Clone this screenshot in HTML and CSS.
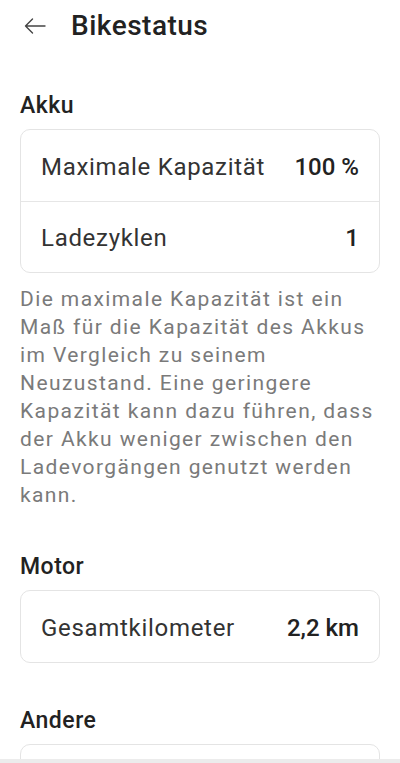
FILE: index.html
```html
<!DOCTYPE html>
<html lang="de">
<head>
    <meta charset="UTF-8">
    <meta name="viewport" content="width=device-width, initial-scale=1.0">
    <title>Bikestatus</title>
    <link rel="stylesheet" href="styles.css">
</head>
<body>
    <div class="topbar">
        <a class="back" href="#">
            <svg width="22" height="16" viewBox="0 0 22 16">
                <path d="M21 8H1.5 M8.5 1 L1.5 8 L8.5 15" fill="none" stroke="#444" stroke-width="1.4" stroke-linecap="round" stroke-linejoin="round"/>
            </svg>
        </a>
        <h1 class="title">Bikestatus</h1>
    </div>

    <!-- Akku -->
    <div class="section section-first">
        <h2 class="section-title">Akku</h2>
        <div class="card">
            <div class="row">
                <span class="label">Maximale Kapazität</span>
                <span class="value">100 %</span>
            </div>
            <div class="row">
                <span class="label">Ladezyklen</span>
                <span class="value">1</span>
            </div>
        </div>
        <p class="hint">Die maximale Kapazität ist ein Maß für die Kapazität des Akkus im Vergleich zu seinem Neuzustand. Eine geringere Kapazität kann dazu führen, dass der Akku weniger zwischen den Ladevorgängen genutzt werden kann.</p>
    </div>

    <!-- Motor -->
    <div class="section">
        <h2 class="section-title">Motor</h2>
        <div class="card">
            <div class="row">
                <span class="label">Gesamtkilometer</span>
                <span class="value">2,2 km</span>
            </div>
        </div>
    </div>

    <!-- Andere -->
    <div class="section">
        <h2 class="section-title">Andere</h2>
        <div class="card">
            <div class="row"></div>
        </div>
    </div>

    <div class="navbar"></div>
</body>
</html>
```

FILE: styles.css
```css
body {
    margin: 0;
    padding: 0;
    background: #ffffff;
    font-family: Roboto, 'Liberation Sans', sans-serif;
    color: #222;
}

.topbar {
    display: flex;
    align-items: center;
    height: 50px;
    padding-left: 24px;
}

.back {
    display: flex;
    align-items: center;
    margin-right: 25px;
    margin-top: 2px;
}

.title {
    margin: 0;
    font-size: 28px;
    font-weight: 500;
    letter-spacing: 0.5px;
    color: #222;
}

.section {
    margin-top: 45px;
    padding: 0 20px;
}

.section-first {
    margin-top: 43px;
}

.section-title {
    margin: 0;
    font-size: 23px;
    line-height: 26px;
    font-weight: 500;
    letter-spacing: 0.5px;
    color: #222;
}

.card {
    margin-top: 10px;
    border: 1px solid #e4e4e4;
    border-radius: 10px;
    overflow: hidden;
}

.row {
    display: flex;
    justify-content: space-between;
    align-items: center;
    height: 71px;
    padding: 2px 20px 0;
    box-sizing: border-box;
}

.row + .row {
    border-top: 1px solid #e6e6e6;
}

.label {
    font-size: 24px;
    letter-spacing: 0.7px;
    color: #333;
}

.value {
    font-size: 24px;
    font-weight: 500;
    color: #222;
}

.hint {
    margin: 12px 0 0;
    font-size: 21px;
    line-height: 28px;
    letter-spacing: 1.4px;
    color: #7a7a7a;
}

.navbar {
    position: fixed;
    left: 0;
    right: 0;
    bottom: 0;
    height: 4px;
    background: #ececec;
}
```
